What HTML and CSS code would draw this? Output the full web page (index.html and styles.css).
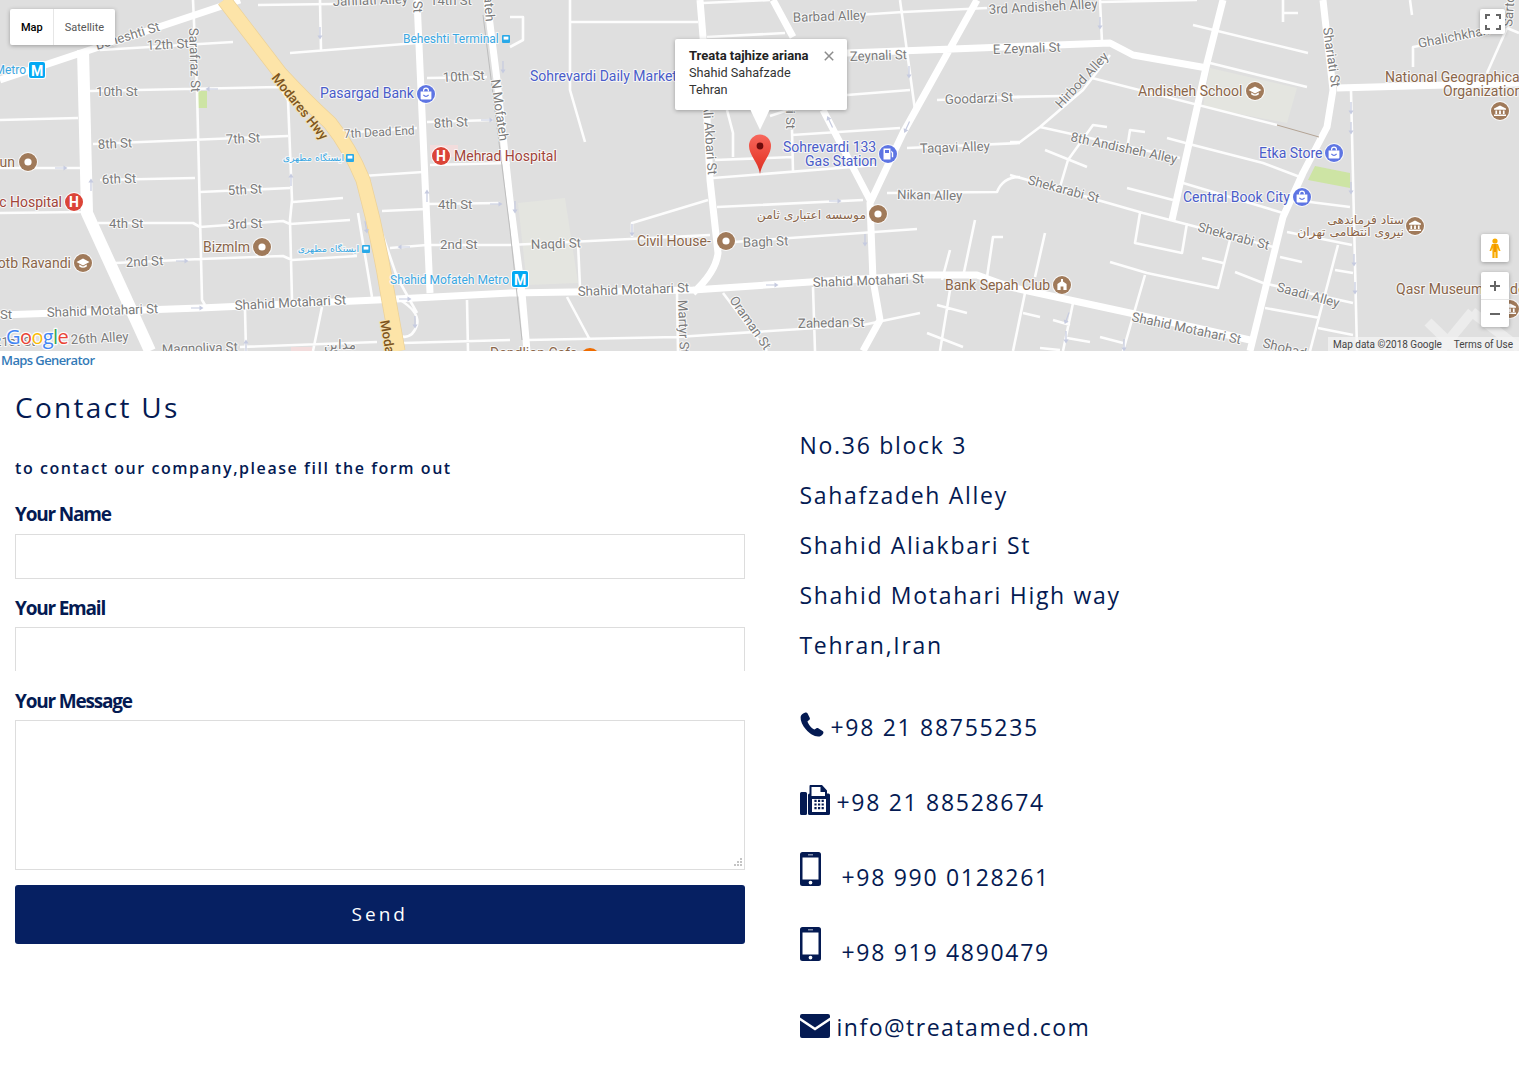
FILE: index.html
```html
<!DOCTYPE html>
<html lang="en">
<head>
    <meta charset="UTF-8">
    <meta name="viewport" content="width=device-width, initial-scale=1.0">
    <title>Contact Us</title>
    <link rel="stylesheet" href="styles.css">
</head>
<body>
    <div class="map">
        <svg class="map-canvas" width="1519" height="351" viewBox="0 0 1519 351">
            <defs>
                <linearGradient id="pin-fill" x1="0" y1="0" x2="0" y2="1"><stop offset="0" stop-color="#f7675c"/><stop offset=".6" stop-color="#ea4335"/><stop offset="1" stop-color="#d93025"/></linearGradient>
                <path id="arrow" d="M-6 -.6H2.5V-2.6L6.5 0L2.5 2.6V.6H-6Z"/>
                <g id="poi"><circle r="10" fill="#fff" opacity=".8"/><circle r="9" fill="#a07a5a"/><circle r="3.6" fill="#fff"/></g>
                <g id="edu"><circle r="10" fill="#fff" opacity=".8"/><circle r="9" fill="#a07a5a"/><path fill="#fff" d="M-6.5 -1L0 -4.5L6.5 -1L0 2.5ZM-3.8 1.6L0 3.6L3.8 1.6V3.6Q0 6 -3.8 3.6Z"/></g>
                <g id="museum"><circle r="10" fill="#fff" opacity=".8"/><circle r="9" fill="#a07a5a"/><path fill="#fff" d="M-6 -2.5L0 -5.5L6 -2.5V-1.2H-6ZM-4.6 -.4H-2.9V3H-4.6ZM-.9 -.4H.9V3H-.9ZM2.9 -.4H4.6V3H2.9ZM-6 3.6H6V5H-6Z"/></g>
                <g id="club"><circle r="10" fill="#fff" opacity=".8"/><circle r="9" fill="#a07a5a"/><path fill="#fff" d="M-1 -6H1V-3.6L4.6 -1V5H1.4V1.5H-1.4V5H-4.6V-1L-1 -3.6Z"/></g>
                <g id="hospital"><circle r="10" fill="#fff" opacity=".8"/><circle r="9" fill="#db4437"/><text class="poi-glyph" y="5" text-anchor="middle">H</text></g>
                <g id="shop"><circle r="10" fill="#fff" opacity=".8"/><circle r="9" fill="#5e75e3"/><path fill="#fff" d="M-5.4 -2.6H5.4V4.6Q5.4 5.6 4.4 5.6H-4.4Q-5.4 5.6 -5.4 4.6Z"/><path fill="none" stroke="#fff" stroke-width="1.2" d="M-2.4 -2.6V-3.4Q-2.4 -5.8 0 -5.8Q2.4 -5.8 2.4 -3.4V-2.6"/><path fill="none" stroke="#5e75e3" stroke-width="1.2" d="M-2.6 .8Q0 4 2.6 .8"/></g>
                <g id="gas"><circle r="10" fill="#fff" opacity=".8"/><circle r="9" fill="#5e75e3"/><path fill="#fff" d="M-4.5 -5.5H2.5V5.5H-4.5ZM3.2 -3.5L5.2 -1.5V3.2H3.8V-1L3.2 -1.8Z"/><rect x="-3" y="-4" width="4" height="3" fill="#5e75e3"/></g>
                <g id="metro"><rect x="-9" y="-9" width="18" height="18" rx="3" fill="#fff"/><rect x="-8" y="-8" width="16" height="16" rx="2" fill="#03a9f4"/><text class="poi-glyph" y="5.5" text-anchor="middle">M</text></g>
                <g id="bus"><rect x="-4" y="-4" width="8" height="8" rx="1" fill="#29a9e8"/><rect x="-2.4" y="-2.4" width="4.8" height="3" fill="#fff"/></g>
            </defs>

            <rect class="land" width="1519" height="351"/>
            <path class="park-pale" d="M518 203L565 198L578 283L527 285ZM1210 68L1297 88L1287 123L1203 107Z"/>
            <path class="park" d="M197 91H207V108H197ZM1315 166L1350 173V188L1308 180Z"/>
            <path class="pink" d="M430 145H458V157H430ZM291 347H312V351H291Z"/>
            <path class="blank" d="M1428 322L1458 351M1472 312L1440 351M1472 312L1519 348"/>

            <path class="road-thin" d="M258 5L333 4M320 0L321 50M290 53L417 43M193 0L197 90L202 300L205 305M100 50L233 42M90 91L280 87L288 100L292 200L290 220L292 300M0 120L78 118M93 144L288 136M0 168L82 168M100 180L195 178M200 192L290 188M293 202L343 198M0 213L83 212M98 223L193 223L200 227L283 221L290 224L350 220M115 263L200 259L283 256L292 260L357 256M340 133L417 128M363 176L423 172M382 211L427 209M427 204L500 203M390 248L427 245L510 245M427 78L487 77M427 122L493 120M430 165L510 163M245 310L246 351M322 307L313 351M240 347L377 342M467 300L468 351M403 343L510 340M400 300Q420 312 417 325Q412 340 400 336Q390 328 395 305M358 213L372 297M373 207L397 277L417 313"/>
            <path class="road-thin" d="M570 0V90L585 142M570 22H698M707 37L785 33M703 3L770 0M510 17H523V40L510 47M857 15L903 12L987 8M900 0L915 110M847 95L910 90M937 100L1020 97M727 110L733 133V157M715 160L793 157M792 130L793 172M792 135L900 128M713 178L877 165M770 116L788 110M907 148L1020 143M717 207L863 200M887 193L997 192Q1003 177 1020 177M708 200L632 223V237M510 245L710 235M720 243L917 229M578 243L580 287M567 297L590 340M528 340L677 337L863 325L920 313M677 293L678 351M723 293L767 351M813 287L815 351M975 220L963 277M950 250L942 280M1003 237H993L987 277M937 305L967 313M927 333L963 347M950 290L940 351"/>
            <path class="road-thin" d="M1100 0L1102 42M1100 2L1197 0M1110 55L1083 90L1040 127L1020 142H1010M1010 97L1063 96M1193 25L1308 53M1210 63L1307 87M1092 78L1277 125M1040 127L1180 158M1167 138L1193 145L1263 163L1300 177M1183 183L1283 213M1127 188L1173 200M1010 175L1143 213L1197 227L1273 247M1310 202L1350 207M1287 232L1352 245M1280 257L1302 262M1140 213L1135 243L1182 253L1187 223M1202 258L1223 263M1230 240L1218 288L1147 273L1110 262M1145 275L1123 351M1045 233L1035 277M1025 293L1013 351M1023 313L1040 317M1235 272L1263 283L1353 303M1265 308L1320 318M1318 328L1353 335M1338 245L1310 351M1335 270L1353 273M1107 127L1093 125L1068 160L1060 187M1145 132L1130 130L1128 143M1045 150L1087 167M1053 320L1070 325M1073 303L1063 351M1067 338L1090 342M1100 337L1123 343M1040 348L1060 350M1283 0V22M1283 13H1298M1410 0L1412 15M1413 67V47L1490 33M1507 28L1487 73M1507 28L1519 33M1351 90L1357 351"/>
            <path class="road-trunk" d="M83 50L87 213L150 351"/>
            <path class="road-main" d="M0 80L240 0M0 315L200 308L377 300L510 293L693 290L810 282L927 275L977 275L1010 287L1130 313L1250 340M417 0L430 293M487 0L497 80L510 200L522 293L527 351M700 0L703 37L710 180L718 253Q716 272 693 293M977 0L903 133L870 203L873 280L880 320L863 351M773 0L793 37M823 110L870 200M847 53L1110 43L1133 55L1207 68M1223 0L1207 63L1172 220M1323 0L1333 90L1327 127L1303 173L1283 217L1250 351M1337 88L1519 83"/>
            <path class="rail" d="M483 15L510 230L522 340"/>
            <path class="rail-brown" d="M1277 125L1319 137"/>
            <path class="hwy-edge" d="M224 0L280 73Q305 100 330 123Q350 148 363 180Q378 235 387 290L398 351"/>
            <path class="hwy" d="M224 0L280 73Q305 100 330 123Q350 148 363 180Q378 235 387 290L398 351"/>

            <g class="arrows">
                <use href="#arrow" transform="translate(212 89) rotate(180)"/>
                <use href="#arrow" transform="translate(320 33) rotate(90)"/>
                <use href="#arrow" transform="translate(61 168)"/>
                <use href="#arrow" transform="translate(91 185) rotate(-90)"/>
                <use href="#arrow" transform="translate(182 261)"/>
                <use href="#arrow" transform="translate(291 180) rotate(-90)"/>
                <use href="#arrow" transform="translate(404 247) rotate(180)"/>
                <use href="#arrow" transform="translate(427 196) rotate(-90)"/>
                <use href="#arrow" transform="translate(496 204)"/>
                <use href="#arrow" transform="translate(487 120)"/>
                <use href="#arrow" transform="translate(503 67) rotate(90)"/>
                <use href="#arrow" transform="translate(197 308)"/>
                <use href="#arrow" transform="translate(405 299)"/>
                <use href="#arrow" transform="translate(415 322) rotate(90)"/>
                <use href="#arrow" transform="translate(366 227) rotate(80)"/>
                <use href="#arrow" transform="translate(246 346) rotate(-90)"/>
                <use href="#arrow" transform="translate(909 72) rotate(90)"/>
                <use href="#arrow" transform="translate(830 122) rotate(-115)"/>
                <use href="#arrow" transform="translate(907 127) rotate(115)"/>
                <use href="#arrow" transform="translate(835 201)"/>
                <use href="#arrow" transform="translate(632 230) rotate(90)"/>
                <use href="#arrow" transform="translate(865 240) rotate(90)"/>
                <use href="#arrow" transform="translate(772 285)"/>
                <use href="#arrow" transform="translate(515 207) rotate(90)"/>
                <use href="#arrow" transform="translate(1100 23) rotate(90)"/>
                <use href="#arrow" transform="translate(1351 108) rotate(90)"/>
                <use href="#arrow" transform="translate(1351 128) rotate(90)"/>
                <use href="#arrow" transform="translate(1351 188) rotate(90)"/>
                <use href="#arrow" transform="translate(1354 260) rotate(90)"/>
                <use href="#arrow" transform="translate(1355 288) rotate(90)"/>
                <use href="#arrow" transform="translate(1067 318) rotate(110)"/>
                <use href="#arrow" transform="translate(1066 337) rotate(90)"/>
                <use href="#arrow" transform="translate(1124 345) rotate(90)"/>
            </g>

            <g class="lbl">
                <text x="97" y="50" transform="rotate(-17 97 50)">Beheshti St</text>
                <text x="147" y="50" transform="rotate(-3 147 50)">12th St</text>
                <text x="189" y="28" transform="rotate(88 189 28)">Sarafraz St</text>
                <text x="96" y="96">10th St</text>
                <text x="98" y="149" transform="rotate(-3 98 149)">8th St</text>
                <text x="226" y="144" transform="rotate(-3 226 144)">7th St</text>
                <text x="102" y="184" transform="rotate(-2 102 184)">6th St</text>
                <text x="228" y="195" transform="rotate(-3 228 195)">5th St</text>
                <text x="109" y="228">4th St</text>
                <text x="228" y="229" transform="rotate(-2 228 229)">3rd St</text>
                <text x="126" y="267" transform="rotate(-3 126 267)">2nd St</text>
                <text x="47" y="317" transform="rotate(-2 47 317)">Shahid Motahari St</text>
                <text x="235" y="310" transform="rotate(-3 235 310)">Shahid Motahari St</text>
                <text x="0" y="319">St</text>
                <text x="-6" y="346">21st St</text>
                <text x="71" y="344" transform="rotate(-3 71 344)">26th Alley</text>
                <text x="162" y="354" transform="rotate(-2 162 354)">Magnoliya St</text>
                <text x="324" y="349" lang="fa">مداین</text>
                <text class="lbl-small" x="344" y="138" transform="rotate(-3 344 138)">7th Dead End</text>
                <text x="443" y="82" transform="rotate(-3 443 82)">10th St</text>
                <text x="434" y="128" transform="rotate(-3 434 128)">8th St</text>
                <text x="438" y="209">4th St</text>
                <text x="440" y="249">2nd St</text>
                <text x="430" y="5">14th St</text>
                <text x="413" y="1" transform="rotate(88 413 1)">St</text>
                <text x="333" y="6" transform="rotate(-2 333 6)">Jannati Alley</text>
                <text x="484" y="-4" transform="rotate(86 484 -4)">ateh</text>
                <text x="491" y="80" transform="rotate(82 491 80)">N Mofateh</text>
                <text x="531" y="249" transform="rotate(-2 531 249)">Naqdi St</text>
                <text x="578" y="296" transform="rotate(-2 578 296)">Shahid Motahari St</text>
                <text x="798" y="328" transform="rotate(-1 798 328)">Zahedan St</text>
                <text x="813" y="287" transform="rotate(-2 813 287)">Shahid Motahari St</text>
                <text x="743" y="247" transform="rotate(-2 743 247)">Bagh St</text>
                <text x="897" y="199" transform="rotate(1 897 199)">Nikan Alley</text>
                <text x="920" y="153" transform="rotate(-2 920 153)">Taqavi Alley</text>
                <text x="945" y="104" transform="rotate(-2 945 104)">Goodarzi St</text>
                <text x="850" y="61" transform="rotate(-2 850 61)">Zeynali St</text>
                <text x="993" y="54" transform="rotate(-2 993 54)">E Zeynali St</text>
                <text x="793" y="22" transform="rotate(-2 793 22)">Barbad Alley</text>
                <text x="989" y="14" transform="rotate(-3 989 14)">3rd Andisheh Alley</text>
                <text x="703" y="104" transform="rotate(86 703 104)">Ali Akbari St</text>
                <text x="786" y="106" transform="rotate(90 786 106)">ri St</text>
                <text x="678" y="300" transform="rotate(88 678 300)">Martyr St</text>
                <text x="729" y="300" transform="rotate(55 729 300)">Oraman St</text>
                <text x="1061" y="109" transform="rotate(-47 1061 109)">Hirbod Alley</text>
                <text x="1070" y="141" transform="rotate(12 1070 141)">8th Andisheh Alley</text>
                <text x="1027" y="184" transform="rotate(15 1027 184)">Shekarabi St</text>
                <text x="1197" y="231" transform="rotate(15 1197 231)">Shekarabi St</text>
                <text x="1276" y="291" transform="rotate(15 1276 291)">Saadi Alley</text>
                <text x="1131" y="321" transform="rotate(12 1131 321)">Shahid Motahari St</text>
                <text x="1262" y="347" transform="rotate(14 1262 347)">Shohadaye</text>
                <text x="1323" y="28" transform="rotate(82 1323 28)">Shariati St</text>
                <text x="1419" y="48" transform="rotate(-11 1419 48)">Ghalichkhan</text>
                <text x="1512" y="27" transform="rotate(-85 1512 27)">Sarto</text>
            </g>
            <g class="lbl-hwy">
                <text x="271" y="78" transform="rotate(51 271 78)">Modares Hwy</text>
                <text x="380" y="321" transform="rotate(80 380 321)">Modares</text>
            </g>
            <g class="lbl-blue">
                <text x="530" y="81">Sohrevardi Daily Market</text>
                <text x="320" y="98">Pasargad Bank</text>
                <text x="783" y="152">Sohrevardi 133</text>
                <text x="805" y="166">Gas Station</text>
                <text x="1259" y="158">Etka Store</text>
                <text x="1183" y="202">Central Book City</text>
            </g>
            <g class="lbl-transit">
                <text x="403" y="43">Beheshti Terminal</text>
                <text x="26" y="74" text-anchor="end">Metro</text>
                <text x="390" y="284">Shahid Mofateh Metro</text>
            </g>
            <g class="lbl-transit-fa" lang="fa">
                <text x="344" y="161" text-anchor="end">ایستگاه مطهری</text>
                <text x="359" y="252" text-anchor="end">ایستگاه مطهری</text>
            </g>
            <g class="lbl-brown">
                <text x="1138" y="96">Andisheh School</text>
                <text x="203" y="252">Bizmlm</text>
                <text x="71" y="268" text-anchor="end">Qotb Ravandi</text>
                <text x="15" y="167" text-anchor="end">Iran Khun</text>
                <text x="637" y="246">Civil House-</text>
                <text x="945" y="290">Bank Sepah Club</text>
                <text x="1385" y="82">National Geographical</text>
                <text x="1443" y="96">Organization</text>
                <text x="1396" y="294">Qasr Museum</text>
                <text x="1510" y="294">de</text>
                <text x="490" y="358">Dandlion Cafe</text>
            </g>
            <g class="lbl-brown lbl-brown-fa" lang="fa">
                <text x="866" y="219" text-anchor="end">موسسه اعتباری ثامن</text>
                <text x="1404" y="224" text-anchor="end">ستاد فرماندهی</text>
                <text x="1404" y="236" text-anchor="end">نیروی انتظامی تهران</text>
            </g>
            <g class="lbl-red">
                <text x="454" y="161">Mehrad Hospital</text>
                <text x="62" y="207" text-anchor="end">Clinic Hospital</text>
            </g>

            <use href="#metro" x="37" y="70"/>
            <use href="#metro" x="520" y="279"/>
            <use href="#bus" x="506" y="39"/>
            <use href="#bus" x="350" y="158"/>
            <use href="#bus" x="366" y="249"/>
            <use href="#hospital" x="441" y="156"/>
            <use href="#hospital" x="74" y="202"/>
            <use href="#poi" x="28" y="162"/>
            <use href="#poi" x="262" y="247"/>
            <use href="#poi" x="726" y="241"/>
            <use href="#poi" x="878" y="214"/>
            <use href="#edu" x="83" y="263"/>
            <use href="#edu" x="1255" y="91"/>
            <use href="#museum" x="1500" y="111"/>
            <use href="#museum" x="1415" y="226"/>
            <use href="#museum" x="1510" y="309"/>
            <use href="#club" x="1062" y="285"/>
            <use href="#shop" x="426" y="94"/>
            <use href="#shop" x="1334" y="153"/>
            <use href="#shop" x="1302" y="197"/>
            <use href="#gas" x="888" y="154"/>
            <circle cx="590" cy="358" r="10" fill="#ef6c00"/>

            <path class="pin" fill="url(#pin-fill)" d="M760 174C758 162 749 155 749 146A11 11.5 0 0 1 771 146C771 155 762 162 760 174Z"/>
            <circle cx="760" cy="146" r="3.4" fill="#6e0c0c"/>

            <text class="google" x="6" y="344"><tspan fill="#4285f4">G</tspan><tspan fill="#ea4335">o</tspan><tspan fill="#fbbc05">o</tspan><tspan fill="#4285f4">g</tspan><tspan fill="#34a853">l</tspan><tspan fill="#ea4335">e</tspan></text>
        </svg>

        <div class="map-type">
            <span class="map-type-btn active">Map</span>
            <span class="map-type-btn">Satellite</span>
        </div>

        <div class="info-window">
            <b>Treata tajhize ariana</b>
            <div>Shahid Sahafzade</div>
            <div>Tehran</div>
            <svg class="info-close" width="10" height="10" viewBox="0 0 10 10"><path d="M.8 .8L9.2 9.2M9.2 .8L.8 9.2"/></svg>
            <svg class="info-tail" width="20" height="21" viewBox="0 0 20 21"><path d="M0 0H20L10 21Z"/></svg>
        </div>

        <button class="map-ctl fullscreen" aria-label="Fullscreen">
            <svg width="16" height="16" viewBox="0 0 16 16"><path d="M1 5V1H5M11 1H15V5M15 11V15H11M5 15H1V11"/></svg>
        </button>
        <button class="map-ctl pegman" aria-label="Street view">
            <svg width="12" height="20" viewBox="0 0 12 20"><circle cx="6" cy="3" r="2.6" fill="#f9ab00"/><path fill="#f9ab00" d="M3 6H9L11.5 13H9.8L8.6 10V20H6.4V14H5.6V20H3.4V10L2.2 13H.5Z"/><path fill="#e37400" d="M5.6 6H6.4V14H5.6Z"/></svg>
        </button>
        <div class="map-ctl zoom-box">
            <span class="zoom-btn zoom-in"></span>
            <span class="zoom-btn zoom-out"></span>
        </div>
        <div class="attribution">
            <span>Map data ©2018 Google</span>
            <span>Terms of Use</span>
        </div>
    </div>
    <a class="map-credit" href="#">Maps Generator</a>

    <div class="row">
        <div class="col form-col">
            <h2>Contact Us</h2>
            <p class="intro">to contact our company,please fill the form out</p>
            <form>
                <label for="name">Your Name</label>
                <input type="text" id="name" class="field">
                <label for="email">Your Email</label>
                <input type="text" id="email" class="field field-cut">
                <label for="message">Your Message</label>
                <textarea id="message" class="field field-area"></textarea>
                <button type="submit" class="send">Send</button>
            </form>
        </div>
        <div class="col info-col">
            <p class="address">No.36 block 3</p>
            <p class="address">Sahafzadeh Alley</p>
            <p class="address">Shahid Aliakbari St</p>
            <p class="address">Shahid Motahari High way</p>
            <p class="address">Tehran,Iran</p>

            <div class="contacts">
                <p class="contact contact-phone">
                    <svg class="icon" width="24" height="25" viewBox="0 0 24 25"><path d="M5.4 .5C6.3 .2 7.2 .6 7.6 1.5L9.7 5.7C10.1 6.5 9.9 7.3 9.2 7.9L7.5 9.3C7.8 10.8 8.7 12.5 10 14.1C11.4 15.7 13 17 14.5 17.6L16.4 16.3C17.1 15.8 17.9 15.9 18.6 16.4L22.6 19.1C23.4 19.7 23.7 20.6 23.2 21.5C22.3 23.4 20.4 24.6 18.1 24.6C13.9 24.6 9.5 21.7 6 17.6C2.5 13.4 .3 8.8 .6 5C.8 2.8 2.9 1.1 5.4 .5Z"/></svg>
                    +98 21 88755235
                </p>
                <p class="contact contact-fax">
                    <svg class="icon" width="30" height="30" viewBox="0 0 30 30"><path fill-rule="evenodd" d="M1.5 7H5.5Q7 7 7 8.5V28.5Q7 30 5.5 30H1.5Q0 30 0 28.5V8.5Q0 7 1.5 7ZM10 0H22L27 5.5V8.5H28.5Q30 8.5 30 10V28.5Q30 30 28.5 30H9.5Q8 30 8 28.5V10Q8 8.5 9.5 8.5V1.5Q9.5 0 10 0ZM11.5 2V11H25V7H20.5V2ZM12 14V27H26V14ZM14.4 14.8H16.6V17H14.4ZM18 14.8H20.2V17H18ZM21.6 14.8H23.8V17H21.6ZM14.4 18.4H16.6V20.6H14.4ZM18 18.4H20.2V20.6H18ZM21.6 18.4H23.8V20.6H21.6ZM14.4 22H16.6V24.2H14.4ZM18 22H20.2V24.2H18ZM21.6 22H23.8V24.2H21.6Z"/></svg>
                    +98 21 88528674
                </p>
                <p class="contact contact-mobile">
                    <svg class="icon" width="21" height="34" viewBox="0 0 21 34"><path fill-rule="evenodd" d="M2.5 0H18.5Q21 0 21 2.5V31.5Q21 34 18.5 34H2.5Q0 34 0 31.5V2.5Q0 0 2.5 0ZM2.5 5.5V27.5H18.5V5.5ZM8 2.4V3.3H13V2.4ZM10.5 28.7A1.9 1.9 0 1 0 10.5 32.5A1.9 1.9 0 1 0 10.5 28.7Z"/></svg>
                    +98 990 0128261
                </p>
                <p class="contact contact-mobile">
                    <svg class="icon" width="21" height="34" viewBox="0 0 21 34"><path fill-rule="evenodd" d="M2.5 0H18.5Q21 0 21 2.5V31.5Q21 34 18.5 34H2.5Q0 34 0 31.5V2.5Q0 0 2.5 0ZM2.5 5.5V27.5H18.5V5.5ZM8 2.4V3.3H13V2.4ZM10.5 28.7A1.9 1.9 0 1 0 10.5 32.5A1.9 1.9 0 1 0 10.5 28.7Z"/></svg>
                    +98 919 4890479
                </p>
                <p class="contact contact-mail">
                    <svg class="icon" width="30" height="24" viewBox="0 0 30 24"><path d="M2 0H28Q30 0 30 2V3.5L15 13.5L0 3.5V2Q0 0 2 0ZM0 6.5L15 16.5L30 6.5V22Q30 24 28 24H2Q0 24 0 22Z"/></svg>
                    info@treatamed.com
                </p>
            </div>
        </div>
    </div>
</body>
</html>
```

FILE: styles.css
```css
* {
    box-sizing: border-box;
}

body {
    margin: 0;
    font-family: "Open Sans", "Noto Sans", Arial, sans-serif;
    color: #041a52;
    background: #fff;
}

/* map */
.map {
    position: relative;
    height: 351px;
    overflow: hidden;
    font-family: Roboto, Arial, sans-serif;
}

.map-canvas {
    display: block;
}

.land { fill: #dfdfdf; }
.park { fill: #cde4a4; }
.park-pale { fill: #e4e5e0; }
.pink { fill: #f2dcdc; }
.blank { fill: none; stroke: #ececec; stroke-width: 10; }

.road-thin,
.road-main,
.road-trunk,
.rail,
.rail-brown,
.hwy,
.hwy-edge {
    fill: none;
    stroke-linejoin: round;
}

.road-thin { stroke: #fff; stroke-width: 2.6; opacity: .92; }
.road-main { stroke: #fff; stroke-width: 7; }
.road-trunk { stroke: #fff; stroke-width: 12; }
.rail { stroke: #bdbdbd; stroke-width: 1; }
.rail-brown { stroke: #b3a394; stroke-width: 1; }
.hwy { stroke: #fde4a8; stroke-width: 13.5; }
.hwy-edge { stroke: #ecd29a; stroke-width: 15; }
.arrows { fill: #c6cbe0; }

.map-canvas text {
    font-family: Roboto, Arial, sans-serif;
    font-size: 13.2px;
    paint-order: stroke;
    stroke: #fff;
    stroke-width: 2px;
    stroke-opacity: .75;
    stroke-linejoin: round;
}

.lbl { fill: #7b7b7b; }
.map-canvas .lbl-small { font-size: 12px; }
.lbl-hwy { fill: #7d5520; }
.lbl-hwy text { font-weight: 500; stroke: #fde4a8; }
.lbl-blue { fill: #4a5cc9; }
.map-canvas .lbl-blue text { font-size: 14px; }
.lbl-transit { fill: #3ba7e2; }
.map-canvas .lbl-transit text { font-size: 12px; }
.lbl-transit-fa { fill: #3ba7e2; }
.map-canvas .lbl-transit-fa text { font-size: 9.3px; font-family: "DejaVu Sans", sans-serif; }
.lbl-brown { fill: #8a6549; }
.map-canvas .lbl-brown text { font-size: 14px; }
.map-canvas .lbl-brown-fa text { font-size: 12.3px; font-family: "DejaVu Sans", sans-serif; }
.lbl-red { fill: #a2443a; }
.map-canvas .lbl-red text { font-size: 14px; }

.map-canvas .poi-glyph {
    font-size: 14px;
    font-weight: 700;
    fill: #fff;
    stroke: none;
}

.map-canvas .google {
    font-family: "Open Sans", sans-serif;
    font-size: 20px;
    letter-spacing: -.6px;
    stroke-width: 2.5px;
    stroke-opacity: .9;
}

.map-type {
    position: absolute;
    top: 9px;
    left: 10px;
    display: flex;
    height: 36px;
    background: #fff;
    border-radius: 2px;
    box-shadow: 0 1px 4px rgba(0, 0, 0, .3);
    font-size: 11px;
}

.map-type-btn {
    display: flex;
    align-items: center;
    padding: 0 11px;
    color: #565656;
    border-left: 1px solid #e6e6e6;
}

.map-type-btn.active {
    padding-right: 10px;
    color: #000;
    font-weight: 500;
    border-left: 0;
}

.info-window {
    position: absolute;
    top: 39px;
    left: 675px;
    width: 172px;
    height: 71px;
    padding: 8px 14px;
    background: #fff;
    border-radius: 2px;
    box-shadow: 0 1px 4px rgba(0, 0, 0, .3);
    font-size: 12.7px;
    line-height: 17px;
    color: #333;
}

.info-window b {
    display: block;
    font-size: 13px;
    font-weight: 700;
    color: #222;
}

.info-close {
    position: absolute;
    top: 12px;
    right: 13px;
}

.info-close path {
    fill: none;
    stroke: #8c8c8c;
    stroke-width: 1.5;
}

.info-tail {
    position: absolute;
    top: 70px;
    left: 75px;
}

.info-tail path {
    fill: #fff;
}

.map-ctl {
    position: absolute;
    padding: 0;
    border: 0;
    background: #fff;
    border-radius: 2px;
    box-shadow: 0 1px 4px rgba(0, 0, 0, .3);
    display: flex;
    align-items: center;
    justify-content: center;
}

.fullscreen {
    top: 9px;
    left: 1480px;
    width: 25px;
    height: 25px;
}

.fullscreen path {
    fill: none;
    stroke: #666;
    stroke-width: 2;
}

.pegman {
    top: 234px;
    left: 1481px;
    width: 28px;
    height: 28px;
}

.zoom-box {
    top: 272px;
    left: 1481px;
    width: 28px;
    height: 55px;
    flex-direction: column;
}

.zoom-btn {
    position: relative;
    flex: 1;
    width: 100%;
}

.zoom-btn::before,
.zoom-in::after {
    content: "";
    position: absolute;
    top: 50%;
    left: 9px;
    width: 10px;
    height: 2px;
    margin-top: -1px;
    background: #666;
}

.zoom-in {
    border-bottom: 1px solid #e6e6e6;
}

.zoom-in::after {
    transform: rotate(90deg);
}

.attribution {
    position: absolute;
    right: 0;
    bottom: 0;
    left: 1328px;
    height: 14px;
    display: flex;
    align-items: center;
    justify-content: space-between;
    padding: 0 6px 0 5px;
    background: rgba(245, 245, 245, .7);
    font-size: 10px;
    color: #444;
}

.map-credit {
    display: block;
    height: 20px;
    padding-left: 1px;
    font-size: 13px;
    font-weight: 600;
    line-height: 19px;
    letter-spacing: -.6px;
    color: #337ab7;
    text-decoration: none;
}

/* contact */
.row {
    display: flex;
}

.col {
    width: 50%;
    padding: 0 15px;
}

h2 {
    margin: 16px 0 0;
    font-size: 28px;
    font-weight: 400;
    line-height: 40px;
    letter-spacing: 2.3px;
}

.intro {
    margin: 29px 0 0;
    font-size: 16px;
    font-weight: 600;
    line-height: 24px;
    letter-spacing: 1.55px;
}

label {
    display: block;
    margin-bottom: 6px;
    padding-top: 1px;
    font-size: 19px;
    font-weight: 700;
    line-height: 27px;
    letter-spacing: -1.2px;
}

.intro + form {
    margin-top: 20px;
}

.field {
    display: block;
    width: 100%;
    height: 45px;
    margin-bottom: 15px;
    padding: 6px 12px;
    border: 1px solid #ddd;
    border-radius: 0;
    background: #fff;
    outline: 0;
}

.field-cut {
    height: 44px;
    margin-top: -1px;
    margin-bottom: 16px;
    border-bottom: 0;
}

.field-area {
    height: 150px;
    margin-top: -1px;
}

.field-area::-webkit-resizer {
    background:
        linear-gradient(#c4c4c4, #c4c4c4) 11px 4px / 2px 2px no-repeat,
        linear-gradient(#c4c4c4, #c4c4c4) 11px 7px / 2px 2px no-repeat,
        linear-gradient(#c4c4c4, #c4c4c4) 11px 10px / 2px 2px no-repeat,
        linear-gradient(#c4c4c4, #c4c4c4) 8px 7px / 2px 2px no-repeat,
        linear-gradient(#c4c4c4, #c4c4c4) 8px 10px / 2px 2px no-repeat,
        linear-gradient(#c4c4c4, #c4c4c4) 5px 10px / 2px 2px no-repeat;
}

.send {
    display: block;
    width: 100%;
    height: 59px;
    padding: 0 0 2px;
    border: 0;
    border-radius: 3px;
    background: #062062;
    color: #fff;
    font-family: inherit;
    font-size: 19px;
    letter-spacing: 3px;
}

.info-col {
    padding-left: 40px;
    padding-top: 49px;
}

.address {
    margin: 0;
    height: 50px;
    font-size: 23px;
    line-height: 50px;
    letter-spacing: 1.7px;
}

.contacts {
    margin-top: 33px;
}

.contact {
    display: flex;
    align-items: flex-end;
    margin: 0 0 35px;
    height: 40px;
    font-size: 23px;
    line-height: 32px;
    letter-spacing: 1.7px;
    white-space: nowrap;
}

.icon {
    flex: none;
    fill: currentColor;
}

.contact-phone .icon { margin-right: 7px; margin-bottom: 6px; }
.contact-fax .icon { margin-right: 7px; margin-bottom: 3px; }
.contact-mobile .icon { margin-right: 21px; margin-bottom: 7px; }
.contact-mail .icon { margin-right: 7px; margin-bottom: 5px; letter-spacing: 0; }
.contact-mail { letter-spacing: 1.5px; }
```
